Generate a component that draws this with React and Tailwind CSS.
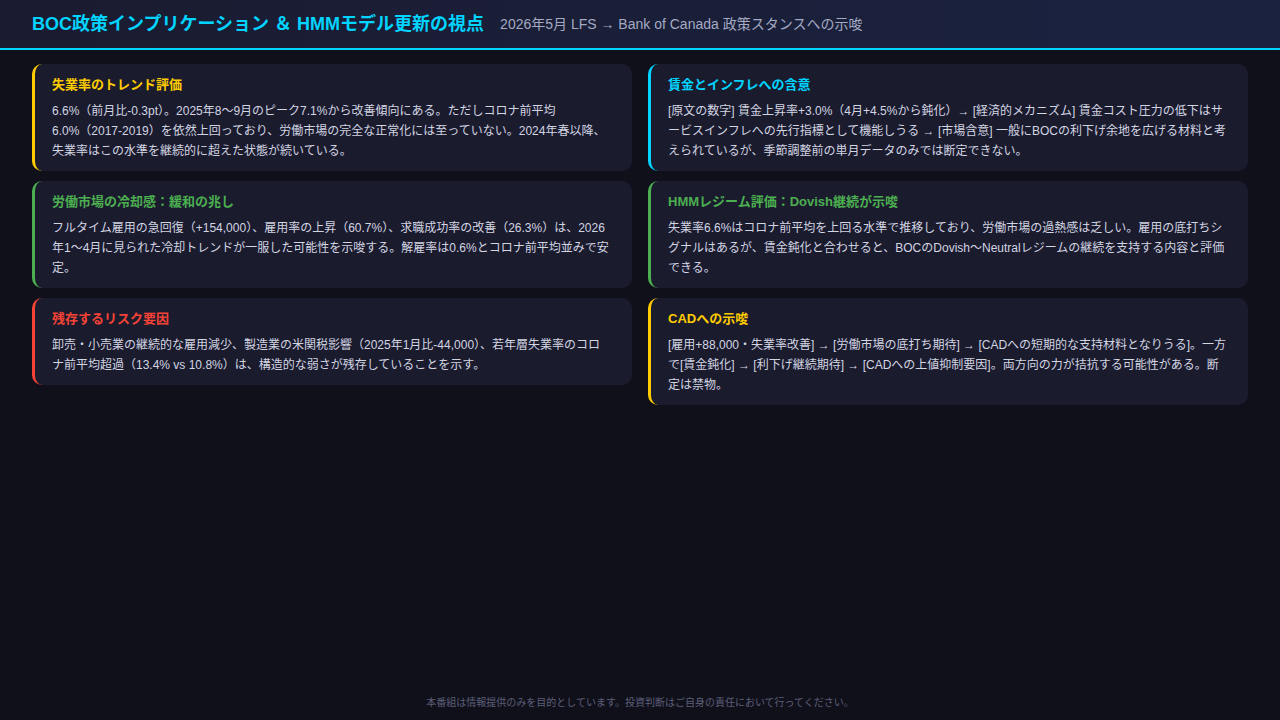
const F = { fontFamily: '"Liberation Sans", "Noto Sans CJK JP", sans-serif' };

const cards = [
  [
    { c: "border-[#ffcc00]", t: "text-[#ffcc00]", h: "失業率のトレンド評価", b: "6.6%（前月比-0.3pt）。2025年8〜9月のピーク7.1%から改善傾向にある。ただしコロナ前平均6.0%（2017-2019）を依然上回っており、労働市場の完全な正常化には至っていない。2024年春以降、失業率はこの水準を継続的に超えた状態が続いている。" },
    { c: "border-[#4caf50]", t: "text-[#4caf50]", h: "労働市場の冷却感：緩和の兆し", b: "フルタイム雇用の急回復（+154,000）、雇用率の上昇（60.7%）、求職成功率の改善（26.3%）は、2026年1〜4月に見られた冷却トレンドが一服した可能性を示唆する。解雇率は0.6%とコロナ前平均並みで安定。" },
    { c: "border-[#f44336]", t: "text-[#f44336]", h: "残存するリスク要因", b: "卸売・小売業の継続的な雇用減少、製造業の米関税影響（2025年1月比-44,000）、若年層失業率のコロナ前平均超過（13.4% vs 10.8%）は、構造的な弱さが残存していることを示す。" },
  ],
  [
    { c: "border-[#00d4ff]", t: "text-[#00d4ff]", h: "賃金とインフレへの含意", b: "[原文の数字] 賃金上昇率+3.0%（4月+4.5%から鈍化）→ [経済的メカニズム] 賃金コスト圧力の低下はサービスインフレへの先行指標として機能しうる → [市場含意] 一般にBOCの利下げ余地を広げる材料と考えられているが、季節調整前の単月データのみでは断定できない。" },
    { c: "border-[#4caf50]", t: "text-[#4caf50]", h: "HMMレジーム評価：Dovish継続が示唆", b: "失業率6.6%はコロナ前平均を上回る水準で推移しており、労働市場の過熱感は乏しい。雇用の底打ちシグナルはあるが、賃金鈍化と合わせると、BOCのDovish〜Neutralレジームの継続を支持する内容と評価できる。" },
    { c: "border-[#ffcc00]", t: "text-[#ffcc00]", h: "CADへの示唆", b: "[雇用+88,000・失業率改善] → [労働市場の底打ち期待] → [CADへの短期的な支持材料となりうる]。一方で[賃金鈍化] → [利下げ継続期待] → [CADへの上値抑制要因]。両方向の力が拮抗する可能性がある。断定は禁物。" },
  ],
];

function Card({ d }) {
  return (
    <div className={`bg-[#1b1b2e] rounded-[10px] border-l-[3px] ${d.c} pl-[17px] pr-5 pt-[11px] pb-[10px]`}>
      <div className={`text-[13px] font-bold ${d.t} leading-[20px] mb-[6px]`}>{d.h}</div>
      <div className="text-[12px] leading-[20px] text-[#d2d5e2]">{d.b}</div>
    </div>
  );
}

export default function App() {
  return (
    <div style={F} className="w-[1280px] h-[720px] bg-[#10101b] flex flex-col overflow-hidden">
      <div className="h-[50px] shrink-0 bg-gradient-to-r from-[#1a1b30] to-[#1a2240] border-b-2 border-[#00d4ff] flex items-center px-8 gap-4">
        <div className="text-[18px] font-bold text-[#00d4ff]">BOC政策インプリケーション ＆ HMMモデル更新の視点</div>
        <div className="text-[14px] text-[#a4aac4]">2026年5月 LFS → Bank of Canada 政策スタンスへの示唆</div>
      </div>
      <div className="grid grid-cols-2 gap-4 px-8 pt-[14px] items-start">
        {cards.map((col, i) => (
          <div key={i} className="flex flex-col gap-[10px]">
            {col.map((d, j) => <Card key={j} d={d} />)}
          </div>
        ))}
      </div>
      <div className="mt-auto pb-[10px] text-center text-[10px] text-[#5c5f78]">本番組は情報提供のみを目的としています。投資判断はご自身の責任において行ってください。</div>
    </div>
  );
}
